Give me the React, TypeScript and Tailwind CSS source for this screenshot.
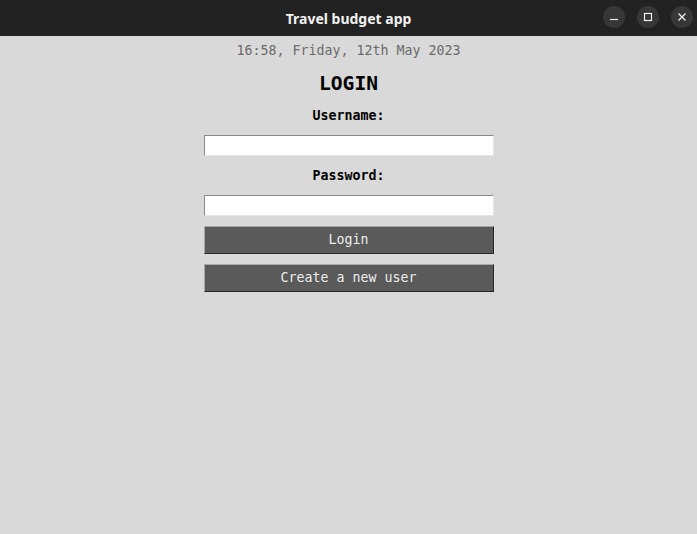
import React from 'react';

const mono = { fontFamily: '"DejaVu Sans Mono", "Liberation Mono", monospace' };

const TitleBar: React.FC = () => (
    <div className="relative flex h-9 items-center justify-center bg-[#222222]">
        <span className="text-[14px] font-bold text-[#f2f2f2]" style={{ fontFamily: '"Noto Sans", sans-serif' }}>
            Travel budget app
        </span>
        <div className="absolute right-[4px] top-[6px] flex gap-[12px]">
            <button className="flex h-[22px] w-[22px] items-center justify-center rounded-full bg-[#373737]">
                <svg width="10" height="10" viewBox="0 0 10 10">
                    <path d="M1 7.5h8" stroke="#f0f0f0" strokeWidth="1.2" />
                </svg>
            </button>
            <button className="flex h-[22px] w-[22px] items-center justify-center rounded-full bg-[#373737]">
                <svg width="10" height="10" viewBox="0 0 10 10">
                    <rect x="1.5" y="1.5" width="7" height="7" fill="none" stroke="#f0f0f0" strokeWidth="1.2" />
                </svg>
            </button>
            <button className="flex h-[22px] w-[22px] items-center justify-center rounded-full bg-[#373737]">
                <svg width="10" height="10" viewBox="0 0 10 10">
                    <path d="M1.5 1.5l7 7M8.5 1.5l-7 7" stroke="#f0f0f0" strokeWidth="1.3" />
                </svg>
            </button>
        </div>
    </div>
);

const Field: React.FC<{ type?: string }> = ({ type = 'text' }) => (
    <input
        type={type}
        className="mt-[11px] h-[21px] w-[290px] border border-t-[#8a8a8a] border-l-[#8a8a8a] border-r-[#e6e6e6] border-b-[#e6e6e6] bg-white px-1 outline-none"
    />
);

const ActionButton: React.FC<{ label: string }> = ({ label }) => (
    <button
        className="mt-[10px] h-[28px] w-[290px] border border-t-[#a8a8a8] border-l-[#a8a8a8] border-r-[#262626] border-b-[#262626] bg-[#5a5a5a] text-[13.3px] text-[#ececec]"
        style={mono}
    >
        {label}
    </button>
);

export default function App() {
    return (
        <div className="flex h-[534px] w-[697px] flex-col overflow-hidden bg-[#d9d9d9]">
            <TitleBar />
            <div className="flex flex-col items-center pt-[7px]" style={mono}>
                <div className="h-[16px] text-[13.3px] leading-[16px] text-[#6b6b6b]">16:58, Friday, 12th May 2023</div>
                <div className="mt-[13px] h-[24px] text-[19.6px] font-bold leading-[24px] text-black">LOGIN</div>
                <div className="mt-[12px] h-[16px] text-[13.3px] font-bold leading-[16px] text-black">Username:</div>
                <Field />
                <div className="mt-[12px] h-[16px] text-[13.3px] font-bold leading-[16px] text-black">Password:</div>
                <Field type="password" />
                <ActionButton label="Login" />
                <ActionButton label="Create a new user" />
            </div>
        </div>
    );
}
